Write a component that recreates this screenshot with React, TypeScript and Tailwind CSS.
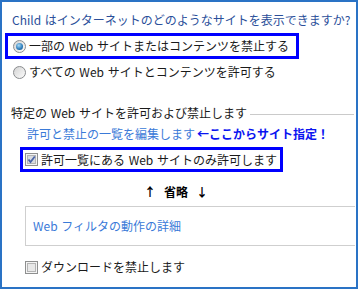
import React from 'react';

const font = { fontFamily: '"Noto Sans CJK JP", "Noto Sans", sans-serif' };

function Radio({ checked }: { checked?: boolean }) {
  return (
    <span className="w-[13px] h-[13px] shrink-0 rounded-full border border-[#8a8c8e] bg-[linear-gradient(135deg,#d4d4d4,#fbfbfb)] flex items-center justify-center">
      {checked && (
        <span className="w-[7px] h-[7px] rounded-full bg-[radial-gradient(circle_at_40%_35%,#a9dcf8,#2a79b8_60%,#17507f)]" />
      )}
    </span>
  );
}

function Checkbox({ checked }: { checked?: boolean }) {
  return (
    <svg width="13" height="13" viewBox="0 0 13 13" className="shrink-0">
      <rect x="0.5" y="0.5" width="12" height="12" fill="#f4f4f4" stroke="#8e8f8f" />
      <rect x="2.5" y="2.5" width="8" height="8" fill={checked ? '#d8dbe0' : '#e8e8e8'} stroke="#b4b4b4" />
      {checked && (
        <path d="M3.5 6.5 L5.5 9 L9.8 3.5" fill="none" stroke="#4b64a8" strokeWidth="1.8" />
      )}
    </svg>
  );
}

export default function App() {
  return (
    <div className="w-[359px] h-[290px] bg-white text-[12px] leading-4 text-[#1a1a1a] [word-spacing:1px]" style={font}>
      <div className="w-[358px] h-[289px] border-2 border-[#2a73c5] flex flex-col">
        {/* question */}
        <div className="pt-[10px] pl-[10px] text-[#2b4f9a] whitespace-nowrap">
          Child はインターネットのどのようなサイトを表示できますか?
        </div>

        <div className="mt-[5px] ml-[3px] w-[294px] h-[26px] border-[3px] border-[#0000ff] flex items-center pl-[5px] gap-[3px]">
          <Radio checked />
          <span>一部の Web サイトまたはコンテンツを禁止する</span>
        </div>

        <div className="mt-[5px] ml-[11px] flex items-center gap-[3px]">
          <Radio />
          <span>すべての Web サイトとコンテンツを許可する</span>
        </div>

        {/* group heading with rule */}
        <div className="mt-[25px] ml-[9px] mr-[2px] flex items-center gap-[3px]">
          <span className="whitespace-nowrap">特定の Web サイトを許可および禁止します</span>
          <span className="flex-1 h-px bg-[#cacaca] mt-[3px]" />
        </div>

        <div className="mt-[5px] ml-[25px] whitespace-nowrap">
          <span className="text-[#3a7ad8]">許可と禁止の一覧を編集します</span>
          <span className="ml-[2px] font-bold text-[#0a14f0]">←ここからサイト指定！</span>
        </div>

        <div className="mt-[5px] ml-[18px] w-[263px] h-[25px] border-[3px] border-[#0000ff] flex items-center pl-[2px] gap-[3px]">
          <Checkbox checked />
          <span>許可一覧にある Web サイトのみ許可します</span>
        </div>

        <div className="mt-[12px] pl-[142px] flex items-center font-bold text-black">
          <span className="w-[8px] text-center">↑</span>
          <span className="ml-[12px]">省略</span>
          <span className="ml-[8px] w-[8px] text-center">↓</span>
        </div>

        <div className="mt-[6px] ml-[23px] w-[330px] h-[40px] border-y border-l border-[#cfcfcf] flex items-center pl-[7px] text-[#3a7ad8]">
          Web フィルタの動作の詳細
        </div>

        <div className="mt-[13px] ml-[23px] flex items-center gap-[3px]">
          <Checkbox />
          <span>ダウンロードを禁止します</span>
        </div>
      </div>
    </div>
  );
}
